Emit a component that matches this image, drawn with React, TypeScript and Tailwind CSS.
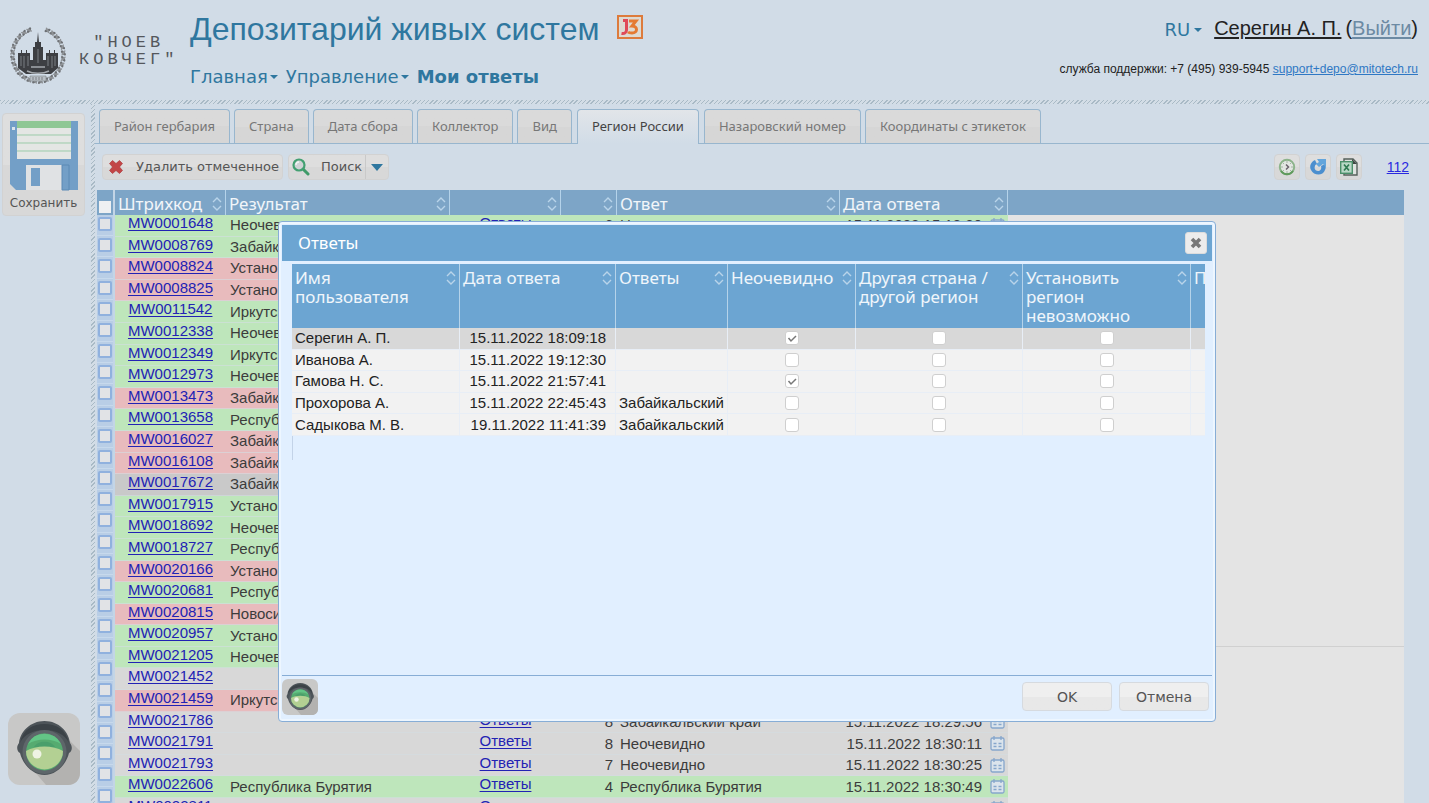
import { ReactNode } from "react";
import { clsx } from "clsx";

type Tone = "green" | "pink" | "grey" | "active";

interface Row {
  code: string;
  result: string;
  tone: Tone;
  count: number;
  answer: string;
  date: string;
}

const row = (code: string, result: string, tone: Tone, count: number, answer: string, time: string): Row => ({
  code,
  result,
  tone,
  count,
  answer,
  date: `15.11.2022 ${time}`,
});

const ROWS: Row[] = [
  row("MW0001648", "Неочевидно", "green", 6, "Неочевидно", "15:18:20"),
  row("MW0008769", "Забайкальский край", "green", 5, "Забайкальский край", "15:19:02"),
  row("MW0008824", "Установить регион", "pink", 5, "Неочевидно", "15:20:14"),
  row("MW0008825", "Установить регион", "pink", 5, "Неочевидно", "15:21:40"),
  row("MW0011542", "Иркутская область", "green", 6, "Иркутская область", "15:24:11"),
  row("MW0012338", "Неочевидно", "green", 5, "Неочевидно", "15:26:35"),
  row("MW0012349", "Иркутская область", "green", 4, "Иркутская область", "15:29:09"),
  row("MW0012973", "Неочевидно", "green", 5, "Неочевидно", "15:31:52"),
  row("MW0013473", "Забайкальский край", "pink", 6, "Неочевидно", "15:40:27"),
  row("MW0013658", "Республика Бурятия", "green", 5, "Республика Бурятия", "15:44:03"),
  row("MW0016027", "Забайкальский край", "pink", 5, "Неочевидно", "15:51:16"),
  row("MW0016108", "Забайкальский край", "pink", 7, "Неочевидно", "16:02:48"),
  row("MW0017672", "Забайкальский край", "active", 5, "Неочевидно", "18:09:18"),
  row("MW0017915", "Установить регион", "green", 5, "Неочевидно", "18:11:33"),
  row("MW0018692", "Неочевидно", "green", 6, "Неочевидно", "18:13:05"),
  row("MW0018727", "Республика Бурятия", "green", 5, "Республика Бурятия", "18:14:50"),
  row("MW0020166", "Установить регион", "pink", 5, "Неочевидно", "18:16:22"),
  row("MW0020681", "Республика Бурятия", "green", 4, "Республика Бурятия", "18:18:07"),
  row("MW0020815", "Новосибирская область", "pink", 6, "Неочевидно", "18:20:31"),
  row("MW0020957", "Установить регион", "green", 5, "Неочевидно", "18:22:46"),
  row("MW0021205", "Неочевидно", "green", 5, "Неочевидно", "18:24:59"),
  row("MW0021452", "", "grey", 7, "Неочевидно", "18:26:13"),
  row("MW0021459", "Иркутская область", "pink", 6, "Неочевидно", "18:28:40"),
  row("MW0021786", "", "grey", 8, "Забайкальский край", "18:29:56"),
  row("MW0021791", "", "grey", 8, "Неочевидно", "18:30:11"),
  row("MW0021793", "", "grey", 7, "Неочевидно", "18:30:25"),
  row("MW0022606", "Республика Бурятия", "green", 4, "Республика Бурятия", "18:30:49"),
  row("MW0022811", "", "grey", 6, "Неочевидно", "18:31:10"),
];

const TONES: Record<Tone, string> = {
  green: "bg-[#bee6bb]",
  pink: "bg-[#e8bbbd]",
  grey: "bg-[#d8d8d8]",
  active: "bg-[#c9c9c9]",
};

const TABS = [
  "Район гербария",
  "Страна",
  "Дата сбора",
  "Коллектор",
  "Вид",
  "Регион России",
  "Назаровский номер",
  "Координаты с этикеток",
];

const ANSWERS = [
  { name: "Серегин А. П.", date: "15.11.2022 18:09:18", answer: "", unclear: true },
  { name: "Иванова А.", date: "15.11.2022 19:12:30", answer: "", unclear: false },
  { name: "Гамова Н. С.", date: "15.11.2022 21:57:41", answer: "", unclear: true },
  { name: "Прохорова А.", date: "15.11.2022 22:45:43", answer: "Забайкальский", unclear: false },
  { name: "Садыкова М. В.", date: "19.11.2022 11:41:39", answer: "Забайкальский", unclear: false },
];

const GREY_BUTTON =
  "rounded border border-[#d2d2d2] bg-linear-to-b from-[#dedede] from-50% to-[#d8d8d8] to-50% font-['DejaVu_Sans',sans-serif] text-[#555]";

function Emblem() {
  // laurel leaves laid round an ellipse, open at the top
  const leaves = Array.from({ length: 26 }, (_, i) => -68 + i * 12.7);
  return (
    <svg viewBox="0 0 58 60" className="h-15 w-[58px] shrink-0" aria-hidden="true">
      {leaves.map((deg) => {
        const a = (deg * Math.PI) / 180;
        const x = 29 + Math.cos(a) * 25.5;
        const y = 30 + Math.sin(a) * 26.5;
        return (
          <g key={deg}>
            <ellipse cx={x} cy={y} rx="3.2" ry="1.4" fill="#6d7074" transform={`rotate(${deg + 50} ${x} ${y})`} />
            <ellipse cx={x} cy={y} rx="3.2" ry="1" fill="#8f9397" transform={`rotate(${deg + 130} ${x} ${y})`} />
          </g>
        );
      })}
      <path
        d="M9 28h3v-3h1v3h4v-3h1v3h3v7h3V22h2v-5h2l1-10 1 10h2v5h2v13h3v-7h3v-3h1v3h4v-3h1v3h3v15l-7 6H17l-8-6z"
        fill="#3d3f43"
      />
      <path d="M12 31v10M15 31v12M19 31v10M39 31v10M43 31v12M46 31v10M29 24v14" stroke="#8c9095" strokeWidth="0.8" />
      <path d="M18 46c6 3 16 3 22 0M22 42h14" stroke="#a4a9ae" strokeWidth="1.6" fill="none" />
      <path d="M21 51h16v5H21z" fill="#b9c0c7" stroke="#7b7f84" strokeWidth="0.6" />
      <path d="M24 52v3M27 52v3M30 52v3M33 52v3" stroke="#77797d" strokeWidth="0.9" />
    </svg>
  );
}

function BoxedLogo() {
  return (
    <svg viewBox="0 0 26 24" className="h-6 w-[26px]" aria-hidden="true">
      <rect x="1" y="1" width="24" height="22" fill="#dedad2" stroke="#dd7b3c" strokeWidth="2" />
      <path d="M6 5.500h3.500V15c0 2.500-2 4-5 3.500" fill="none" stroke="#e04a57" strokeWidth="3" />
      <path d="M12 6h7l-4 5c6 0 6 7 0 7-2 0-3 0-4-1" fill="none" stroke="#e57a32" strokeWidth="3" />
    </svg>
  );
}

function Caret({ className = "h-1 w-2" }: { className?: string }) {
  return (
    <svg viewBox="0 0 8 4" className={clsx("shrink-0", className)} preserveAspectRatio="none" aria-hidden="true">
      <path d="M0 0h8L4 4z" fill="currentColor" />
    </svg>
  );
}

function SortIcon() {
  return (
    <svg viewBox="0 0 10 14" className="absolute top-[7px] right-[3px] h-3.5 w-2.5" aria-hidden="true">
      <path d="M1 5l4-4 4 4M1 9l4 4 4-4" fill="none" stroke="#b9d4ea" strokeWidth="1.4" />
    </svg>
  );
}

function Floppy() {
  return (
    <svg viewBox="0 0 68 70" className="h-[70px] w-[68px]" aria-hidden="true">
      <path d="M0 0h68v69H6l-6-6z" fill="#739fc7" />
      <path d="M7 0h54v38H7z" fill="#e4e6e4" />
      <path d="M7 0h54v7H7z" fill="#8fc795" />
      <path d="M7 14h54M7 22h54M7 30h54" stroke="#9bcba9" />
      <rect x="2" y="6" width="3" height="3" fill="#dbe4ec" />
      <path d="M16 44h36v25H16z" fill="#e0e2e4" />
      <path d="M21 47h9v18h-9z" fill="#739fc7" />
      <path d="M52 44h7v25h-7z" fill="#739fc7" stroke="#5c8ab5" />
    </svg>
  );
}

function Camera({ className }: { className: string }) {
  return (
    <svg viewBox="0 0 72 72" className={className} aria-hidden="true">
      <rect width="72" height="72" rx="12" fill="#c8c8c7" />
      <path d="M62 28l10 10v22c0 7-5 12-12 12H38L26 58z" fill="#b3b2b0" />
      <path
        d="M36.500 8C51 8 61 19 62 30c3 4 2 8-1 10-3 12-13 22-24.500 22S15 52 12 40c-3-2-4-6-1-10C12 19 22 8 36.500 8z"
        fill="#4d5459"
      />
      <path d="M12 30C15 16 25 11 36.500 11S58 16 61 30c-4-9-14-13-24.500-13S16 21 12 30z" fill="#3b4247" />
      <circle cx="36.500" cy="39" r="22" fill="#5e666a" />
      <circle cx="36.500" cy="39" r="18.500" fill="#56ab70" />
      <path d="M20 31a18.500 18.500 0 0 1 33 0c-9-6-24-6-33 0z" fill="#63c486" />
      <path d="M26 34c4-7 17-7 21 0z" fill="#4a9f6b" />
      <path d="M18 38c10-6 27-6 37 0a18.500 18.500 0 0 1-37 0z" fill="#b3d093" />
      <circle cx="29" cy="41" r="4.500" fill="#eef3e4" />
    </svg>
  );
}

function CalendarIcon() {
  return (
    <svg viewBox="0 0 15 15" className="h-[15px] w-[15px]" aria-hidden="true">
      <rect x="1" y="2" width="13" height="12" rx="1.500" fill="#dbe4ec" stroke="#86a6cc" strokeWidth="1.300" />
      <path d="M4 0v4M11 0v4" stroke="#86a6cc" strokeWidth="1.300" />
      <path d="M3.500 7.500h3M8.500 7.500h3M3.500 10.500h3M8.500 10.500h3" stroke="#86a6cc" strokeWidth="1.600" />
    </svg>
  );
}

function DeleteIcon() {
  return (
    <svg viewBox="0 0 16 16" className="h-4 w-4" aria-hidden="true">
      <path
        d="M1.500 4.500l3-3L8 4.500l3.500-3 3 3L11.500 8l3 3.500-3 3L8 11.500l-3.500 3-3-3L4.500 8z"
        fill="#c24546"
        stroke="#a92f31"
        strokeWidth="0.600"
      />
    </svg>
  );
}

function SearchIcon() {
  return (
    <svg viewBox="0 0 18 18" className="h-[18px] w-[18px]" aria-hidden="true">
      <path d="M11 11l5 5" stroke="#3f9a68" strokeWidth="3" strokeLinecap="round" />
      <circle cx="7" cy="7" r="5.500" fill="#d0d3d6" stroke="#43a072" strokeWidth="2.200" />
      <path d="M4 7a3 3 0 0 1 3-3" fill="none" stroke="#f2f6f6" strokeWidth="1.300" />
    </svg>
  );
}

function ClockIcon() {
  return (
    <svg viewBox="0 0 18 18" className="h-[18px] w-[18px]" aria-hidden="true">
      <circle cx="9" cy="9" r="7.200" fill="#e3e6e3" stroke="#8cb38a" strokeWidth="2" />
      <path d="M3 13a7.200 7.200 0 0 0 12 0" fill="none" stroke="#5f9a5c" strokeWidth="2" />
      <path d="M9 3v2M9 13v2M3 9h2M13 9h2M5 5l1 1M13 5l-1 1M5 13l1-1M13 13l-1-1" stroke="#a3b5a3" />
      <path d="M8 6.500L10.500 9 8 11.500" fill="none" stroke="#6a626c" strokeWidth="1.500" />
    </svg>
  );
}

function RefreshIcon() {
  return (
    <svg viewBox="0 0 18 18" className="h-[18px] w-[18px]" aria-hidden="true">
      <path d="M6 2C2 4 0 8 2 12c3 6 12 6 14 0 1-2 1-4 0-6l-4 2c1 3-1 5-3 5-3 0-4-3-3-5 0-1 1-2 2-2z" fill="#4c8fcf" />
      <path d="M8 1h9v8l-3-3-4 3-3-3 3-2z" fill="#63a5dc" />
    </svg>
  );
}

function ExcelIcon() {
  return (
    <svg viewBox="0 0 18 18" className="h-[18px] w-[18px]" aria-hidden="true">
      <path d="M4 1h9l4 4v12H4z" fill="#dfe3e0" stroke="#55605a" strokeWidth="1.400" />
      <path d="M12 1v5h5z" fill="#3f4844" />
      <rect x="0.700" y="3.700" width="11.600" height="11.600" fill="#b9d8c6" stroke="#4b906a" strokeWidth="1.400" />
      <path d="M4 6.500l5 6M9 6.500l-5 6" stroke="#2f7b52" strokeWidth="1.700" />
    </svg>
  );
}

function IconButton({ label, children }: { label: string; children: ReactNode }) {
  return (
    <button aria-label={label} className={clsx(GREY_BUTTON, "flex h-[26px] w-[26px] items-center justify-center")}>
      {children}
    </button>
  );
}

function Header() {
  return (
    <header className="flex h-25 shrink-0 items-start justify-between pr-[11px] pl-[9px]">
      <div className="flex">
        <div className="flex w-[181px] items-center gap-3 pt-[21px]">
          <Emblem />
          <div className="pb-2 text-center font-['Liberation_Mono',monospace] text-[17px] leading-[17px] tracking-[4px] whitespace-nowrap text-[#54575c]">
            "НОЕВ
            <br />
            КОВЧЕГ"
          </div>
        </div>
        <div className="text-[#2f779f]">
          <div className="flex items-start gap-[18px] pt-[9px]">
            <h1 className="text-[32px] leading-10">Депозитарий живых систем</h1>
            <div className="pt-1.5">
              <BoxedLogo />
            </div>
          </div>
          <nav className="flex items-center gap-2 pt-4 font-['DejaVu_Sans',sans-serif] text-lg leading-6">
            <a href="#" className="flex items-center gap-[2px]">
              Главная <Caret />
            </a>
            <a href="#" className="flex items-center gap-[2px]">
              Управление <Caret />
            </a>
            <a href="#" className="font-bold">
              Мои ответы
            </a>
          </nav>
        </div>
      </div>
      <div className="flex flex-col items-end pt-4 text-[#222]">
        <div className="flex items-end text-xl leading-6">
          <button className="mr-3 flex items-center gap-1 font-['DejaVu_Sans',sans-serif] text-lg leading-5 text-[#2f779f]">
            RU <Caret />
          </button>
          <a href="#" className="underline underline-offset-2">
            Серегин А. П.
          </a>
          <span className="ml-1">
            (
            <a href="#" className="text-[#6c8aa3] underline underline-offset-2">
              Выйти
            </a>
            )
          </span>
        </div>
        <p className="pt-[21px] text-xs leading-4">
          служба поддержки: +7 (495) 939-5945{" "}
          <a href="mailto:support+depo@mitotech.ru" className="text-[#2f78c4] underline">
            support+depo@mitotech.ru
          </a>
        </p>
      </div>
    </header>
  );
}

function Tabs() {
  return (
    <div
      role="tablist"
      className="flex h-10 shrink-0 items-end gap-1 border-b border-[#98b6ce] pl-1 font-['Noto_Sans',sans-serif] text-[13px]"
    >
      {TABS.map((tab) => {
        const selected = tab === "Регион России";
        return (
          <button
            key={tab}
            role="tab"
            aria-selected={selected}
            className={clsx(
              "rounded-t border border-b-0 border-[#98b6ce] px-3.5",
              selected
                ? "mx-px -mb-px h-[35px] bg-linear-to-b from-[#e2e5e9] to-[#d1dce7] text-[#444]"
                : "h-[34px] bg-linear-to-b from-[#dadada] from-50% to-[#d6d6d6] to-50% text-[#777]"
            )}
          >
            {tab}
          </button>
        );
      })}
    </div>
  );
}

function Toolbar() {
  return (
    <div className="flex h-[46px] shrink-0 items-center gap-[5px] pr-5 pl-[7px] text-[13px]">
      <button className={clsx(GREY_BUTTON, "flex h-[26px] items-center gap-3 pr-[3px] pl-[5px]")}>
        <DeleteIcon /> Удалить отмеченное
      </button>
      <div className={clsx(GREY_BUTTON, "flex h-[26px]")}>
        <button className="flex items-center gap-[11px] border-r border-[#c9c9c9] px-[3px]">
          <SearchIcon /> Поиск
        </button>
        <button aria-label="Параметры поиска" className="flex w-[22px] items-center justify-center">
          <Caret className="h-[7px] w-3 text-[#2f779f]" />
        </button>
      </div>
      <div className="ml-auto flex items-center gap-[5px]">
        <IconButton label="История">
          <ClockIcon />
        </IconButton>
        <IconButton label="Обновить">
          <RefreshIcon />
        </IconButton>
        <IconButton label="Экспорт в Excel">
          <ExcelIcon />
        </IconButton>
        <a href="#" className="ml-5 text-sm text-[#2a2ae0] underline">
          112
        </a>
      </div>
    </div>
  );
}

function Th({ children }: { children?: ReactNode }) {
  return (
    <th className="relative border-r border-[#b5d3ea] p-0 pt-1 pr-4 pl-[3px] text-left align-top font-['Noto_Sans',sans-serif] text-[17px] leading-[19px] font-normal text-white/90">
      {children}
      <SortIcon />
    </th>
  );
}

const ROW_BOX = "m-0 h-3.5 w-3.5 appearance-none rounded-xs border-2 border-[#90b1de] bg-[#e1e3e6]";

function MainGrid() {
  return (
    <div className="mr-[25px] flex min-h-0 flex-1 overflow-hidden bg-[#e4e4e4]">
      <div className="h-[618px] w-5 shrink-0 border-x-2 border-r-[#c3d5e6] border-l-[#d1dce7] bg-[#b9cee6]">
        <div className="flex h-[25px] items-end justify-center bg-[#7da5c7] pb-[2px]">
          <input type="checkbox" aria-label="Выбрать все" className="h-3 w-3 appearance-none bg-[#eef0f2]" />
        </div>
        <div className="flex h-[593px] flex-col">
          {ROWS.map((r) => (
            <div key={r.code} className="flex flex-1 items-start justify-center border-b border-[#c7d9ec] pt-[2px]">
              <input type="checkbox" aria-label={r.code} className={ROW_BOX} />
            </div>
          ))}
        </div>
      </div>
      <div className="min-w-0 flex-1 bg-[linear-gradient(#7da5c7_25px,transparent_25px_456px,#d0d0d0_456px_457px,transparent_457px)]">
        <table className="h-[630px] w-[893px] table-fixed border-separate border-spacing-0 text-[15px] leading-5 text-[#3c3c3c]">
          <colgroup>
            <col className="w-[111px]" />
            <col className="w-[224px]" />
            <col className="w-[111px]" />
            <col className="w-14" />
            <col className="w-[223px]" />
            <col className="w-[168px]" />
          </colgroup>
          <thead>
            <tr className="h-[25px] bg-[#7da5c7]">
              <Th>Штрихкод</Th>
              <Th>Результат</Th>
              <Th />
              <Th />
              <Th>Ответ</Th>
              <Th>Дата ответа</Th>
            </tr>
          </thead>
          <tbody>
            {ROWS.map((r) => (
              <tr
                key={r.code}
                className={clsx(
                  TONES[r.tone],
                  "[&>td]:border-b [&>td]:border-[#d4dde2]/60 [&>td]:p-0 [&>td]:whitespace-nowrap"
                )}
              >
                <td className="text-center align-top">
                  <a href="#" className="block h-4 leading-4 text-[#2222b4] underline underline-offset-2">
                    {r.code}
                  </a>
                </td>
                <td>
                  <div className="pl-1">{r.result}</div>
                </td>
                <td className="text-center align-top">
                  <a href="#" className="block h-4 leading-4 text-[#2222b4] underline underline-offset-2">
                    Ответы
                  </a>
                </td>
                <td className="text-right">
                  <div className="pr-1">{r.count}</div>
                </td>
                <td>
                  <div className="pl-[3px]">{r.answer}</div>
                </td>
                <td>
                  <div className="flex items-center justify-end gap-2 pr-[3px]">
                    {r.date}
                    <CalendarIcon />
                  </div>
                </td>
              </tr>
            ))}
          </tbody>
        </table>
      </div>
    </div>
  );
}

function AnswerCheck({ label, checked }: { label: string; checked?: boolean }) {
  return (
    <span className="relative mx-auto block h-3.5 w-3.5">
      <input
        type="checkbox"
        aria-label={label}
        defaultChecked={checked}
        className="peer block h-3.5 w-3.5 appearance-none rounded-[3px] border border-[#cfcfcf] bg-white"
      />
      <svg viewBox="0 0 14 14" className="pointer-events-none absolute inset-0 hidden peer-checked:block" aria-hidden="true">
        <path d="M3.500 7l2.500 3L11 5" fill="none" stroke="#777" strokeWidth="1.500" />
      </svg>
    </span>
  );
}

function AnswersDialog() {
  return (
    <div
      role="dialog"
      aria-labelledby="answers-title"
      className="absolute top-[221px] right-[213px] bottom-[81px] left-[278px] flex flex-col rounded border border-[#87add6] bg-[#e1efff] p-[3px] text-[#222] shadow-[inset_0_0_0_2px_#edf6ff]"
    >
      <div className="flex h-9 shrink-0 items-center justify-between bg-[#6ca5d2] pr-[5px] pl-4">
        <h2 id="answers-title" className="font-['Noto_Sans',sans-serif] text-[17px] text-white">
          Ответы
        </h2>
        <button
          aria-label="Закрыть"
          className="flex h-[22px] w-[22px] items-center justify-center rounded-[3px] border border-[#dcdcdc] bg-[#ececec]"
        >
          <svg viewBox="0 0 12 12" className="h-3 w-3" aria-hidden="true">
            <path d="M2 2l8 8M10 2l-8 8" stroke="#777" strokeWidth="3.600" />
          </svg>
        </button>
      </div>
      <div className="mt-[3px] mr-[7px] ml-[10px] flex-1 overflow-hidden">
        <table className="h-[172px] w-[1066px] table-fixed border-separate border-spacing-0 text-[15px] leading-5">
          <colgroup>
            <col className="w-42" />
            <col className="w-39" />
            <col className="w-28" />
            <col className="w-32" />
            <col className="w-[167px]" />
            <col className="w-42" />
            <col className="w-[167px]" />
          </colgroup>
          <thead>
            <tr className="h-16 bg-[#6ca5d2]">
              <Th>Имя пользователя</Th>
              <Th>Дата ответа</Th>
              <Th>Ответы</Th>
              <Th>Неочевидно</Th>
              <Th>Другая страна / другой регион</Th>
              <Th>Установить регион невозможно</Th>
              <Th>П</Th>
            </tr>
          </thead>
          <tbody>
            {ANSWERS.map((a, i) => (
              <tr
                key={a.name}
                className={clsx(
                  "[&>td]:border-r [&>td]:border-b [&>td]:border-[#e8eef6] [&>td]:p-0 [&>td]:whitespace-nowrap",
                  i === 0 ? "bg-[#d8d8d8]" : "bg-[#f2f2f2]"
                )}
              >
                <td>
                  <div className="pl-[3px]">{a.name}</div>
                </td>
                <td className="text-right">
                  <div className="pr-[9px]">{a.date}</div>
                </td>
                <td>
                  <div className="pl-[3px]">{a.answer}</div>
                </td>
                <td>
                  <AnswerCheck label="Неочевидно" checked={a.unclear} />
                </td>
                <td>
                  <AnswerCheck label="Другая страна / другой регион" />
                </td>
                <td>
                  <AnswerCheck label="Установить регион невозможно" />
                </td>
                <td />
              </tr>
            ))}
          </tbody>
        </table>
        <div className="h-6 border-l border-[#c3d3e8]" />
      </div>
      <div className="flex h-[43px] shrink-0 items-start gap-[7px] border-t border-[#87add6] pt-[3px] pr-[3px]">
        <button aria-label="Снимок экрана" className="mr-auto">
          <Camera className="h-9 w-9" />
        </button>
        {["OK", "Отмена"].map((label) => (
          <button
            key={label}
            className="mt-[3px] h-[29px] w-[90px] rounded border border-[#d6dadf] bg-linear-to-b from-[#efefef] from-50% to-[#e8e8e8] to-50% font-['DejaVu_Sans',sans-serif] text-sm text-[#555]"
          >
            {label}
          </button>
        ))}
      </div>
    </div>
  );
}

const HATCH = "bg-[repeating-linear-gradient(135deg,#a9bac6_0_1px,#d3dde6_1px_3px)]";

export default function App() {
  return (
    <div className="relative flex h-screen flex-col overflow-hidden bg-[#d1dce7] font-['Liberation_Sans',Arial,sans-serif]">
      <Header />
      <div className={clsx(HATCH, "h-1 shrink-0")} />
      <div className="flex min-h-0 flex-1">
        <aside className="flex w-[91px] shrink-0 flex-col justify-between pt-[9px] pb-[18px] pl-[2px]">
          <button className={clsx(GREY_BUTTON, "flex h-[103px] w-[83px] flex-col items-center gap-1 pt-[7px] text-xs")}>
            <Floppy />
            Сохранить
          </button>
          <button aria-label="Сделать снимок" className="ml-[6px] w-18">
            <Camera className="h-18 w-18" />
          </button>
        </aside>
        <div className={clsx(HATCH, "w-1 shrink-0")} />
        <main className="flex min-w-0 flex-1 flex-col">
          <Tabs />
          <Toolbar />
          <MainGrid />
        </main>
      </div>
      <AnswersDialog />
    </div>
  );
}
